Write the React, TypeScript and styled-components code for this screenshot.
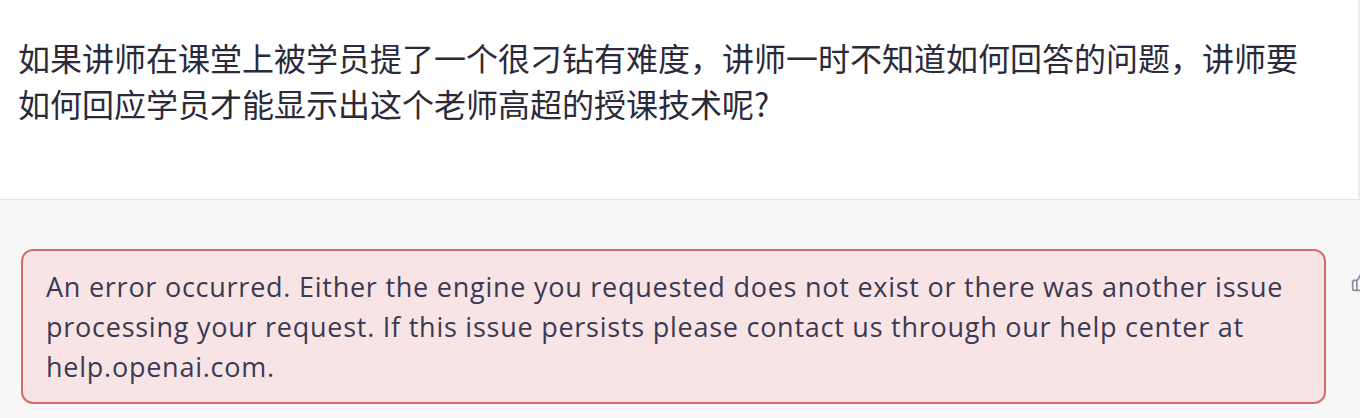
import React from 'react'
import styled, { createGlobalStyle } from 'styled-components'
import { ThumbsUp } from 'lucide-react'

const GlobalStyle = createGlobalStyle`
  html, body {
    margin: 0;
    padding: 0;
    width: 1360px;
    height: 418px;
    overflow: hidden;
    background: #f7f7f8;
  }
`

const Page = styled.div`
  width: 1360px;
  height: 418px;
  overflow: hidden;
  display: flex;
  flex-direction: column;
`

const Question = styled.div`
  height: 200px;
  box-sizing: border-box;
  padding: 34px 40px 0 18px;
  background: #ffffff;
  border-bottom: 1px solid #e3e3e6;
  border-right: 2px solid #ececf0;
  font-family: 'Noto Sans CJK SC', 'Noto Sans', sans-serif;
  font-size: 32px;
  line-height: 46px;
  color: #2c2a3a;
`

const AnswerRow = styled.div`
  flex: 1;
  display: flex;
  align-items: flex-start;
  gap: 25px;
  padding: 49px 0 0 21px;
  background: #f7f7f8;
`

const ErrorBox = styled.div`
  width: 1305px;
  flex-shrink: 0;
  box-sizing: border-box;
  padding: 16px 20px 15px 23px;
  background: #f8e4e4;
  border: 2px solid #d56b6b;
  border-radius: 12px;
  font-family: 'Open Sans', 'Noto Sans', sans-serif;
  font-size: 27px;
  letter-spacing: 0.75px;
  line-height: 40px;
  color: #393a55;
`

const Feedback = styled.div`
  flex-shrink: 0;
  margin-top: 23px;
  color: #8e8ea0;
  display: flex;
`

export default function App() {
  return (
    <Page>
      <GlobalStyle />
      <Question>
        如果讲师在课堂上被学员提了一个很刁钻有难度，讲师一时不知道如何回答的问题，讲师要如何回应学员才能显示出这个老师高超的授课技术呢?
      </Question>
      <AnswerRow>
        <ErrorBox>
          An error occurred. Either the engine you requested does not exist or there was another issue
          processing your request. If this issue persists please contact us through our help center at
          help.openai.com.
        </ErrorBox>
        <Feedback>
          <ThumbsUp size={20} strokeWidth={2} />
        </Feedback>
      </AnswerRow>
    </Page>
  )
}
